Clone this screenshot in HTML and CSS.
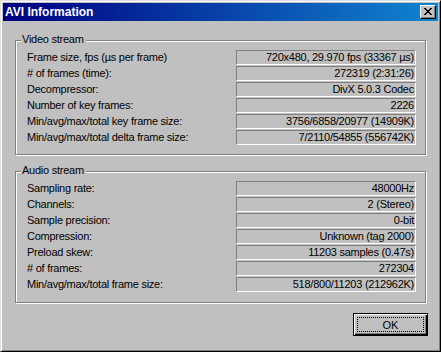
FILE: index.html
```html
<!DOCTYPE html>
<html lang="en">
<head>
  <meta charset="UTF-8" />
  <title>AVI Information</title>
  <link rel="stylesheet" href="styles.css">
</head>
<body>

<div class="window">
  <div class="titlebar">
    <span class="title">AVI Information</span>
    <button class="close" aria-label="Close">
      <svg width="8" height="7" viewBox="0 0 8 7" shape-rendering="crispEdges">
        <path d="M0 0h2v1h-2z M6 0h2v1h-2z M1 1h2v1h-2z M5 1h2v1h-2z M2 2h4v1h-4z M3 3h2v1h-2z M2 4h4v1h-4z M1 5h2v1h-2z M5 5h2v1h-2z M0 6h2v1h-2z M6 6h2v1h-2z" fill="#000"/>
      </svg>
    </button>
  </div>

  <div class="group video">
    <span class="group-title">Video stream</span>
    <div class="rows">
      <span class="label">Frame size, fps (µs per frame)</span>
      <span class="value">720x480, 29.970 fps (33367 µs)</span>
      <span class="label"># of frames (time):</span>
      <span class="value">272319 (2:31:26)</span>
      <span class="label">Decompressor:</span>
      <span class="value">DivX 5.0.3 Codec</span>
      <span class="label">Number of key frames:</span>
      <span class="value">2226</span>
      <span class="label">Min/avg/max/total key frame size:</span>
      <span class="value">3756/6858/20977 (14909K)</span>
      <span class="label">Min/avg/max/total delta frame size:</span>
      <span class="value">7/2110/54855 (556742K)</span>
    </div>
  </div>

  <div class="group audio">
    <span class="group-title">Audio stream</span>
    <div class="rows">
      <span class="label">Sampling rate:</span>
      <span class="value">48000Hz</span>
      <span class="label">Channels:</span>
      <span class="value">2 (Stereo)</span>
      <span class="label">Sample precision:</span>
      <span class="value">0-bit</span>
      <span class="label">Compression:</span>
      <span class="value">Unknown (tag 2000)</span>
      <span class="label">Preload skew:</span>
      <span class="value">11203 samples (0.47s)</span>
      <span class="label"># of frames:</span>
      <span class="value">272304</span>
      <span class="label">Min/avg/max/total frame size:</span>
      <span class="value">518/800/11203 (212962K)</span>
    </div>
  </div>

  <div class="actions">
    <button class="ok"><span class="focus">OK</span></button>
  </div>
</div>

</body>
</html>
```

FILE: styles.css
```css
body {
  margin: 0;
  background: #c0c0c0;
  font-family: "Liberation Sans", Arial, sans-serif;
  font-size: 11px;
  letter-spacing: -0.25px;
  color: #000;
}
.window {
  width: 441px;
  height: 352px;
  box-sizing: border-box;
  background: #c0c0c0;
  border: 1px solid;
  border-color: #dfdfdf #000 #000 #dfdfdf;
  box-shadow: inset 1px 1px #fff, inset -1px -1px #808080;
  padding: 2px;
}
.titlebar {
  height: 18px;
  display: flex;
  align-items: center;
  justify-content: space-between;
  padding: 0 2px 0 2px;
  background: linear-gradient(to right, #000080, #1084d0);
}
.title {
  color: #fff;
  font-weight: bold;
  font-size: 12px;
  letter-spacing: 0;
}
.close {
  width: 16px;
  height: 14px;
  box-sizing: border-box;
  padding: 2px 0 0 3px;
  margin: 0;
  display: flex;
  align-items: flex-start;
  background: #c0c0c0;
  border: 1px solid;
  border-color: #fff #000 #000 #fff;
  box-shadow: inset -1px -1px #808080;
}
.group {
  position: relative;
  margin: 19px 12px 0;
  border: 1px solid #808080;
  box-shadow: inset 1px 1px #fff, 1px 1px #fff;
  padding: 9px 9px 9px 11px;
}
.audio {
  margin-top: 16px;
  padding-bottom: 10px;
}
.group-title {
  position: absolute;
  top: -8px;
  left: 5px;
  padding: 0 2px 0 1px;
  line-height: 13px;
  background: #c0c0c0;
}
.rows {
  display: grid;
  grid-template-columns: 1fr 180px;
  row-gap: 1px;
}
.label {
  line-height: 15px;
  white-space: nowrap;
}
.value {
  height: 15px;
  box-sizing: border-box;
  border: 1px solid;
  border-color: #808080 #fff #fff #808080;
  padding-right: 1px;
  line-height: 13px;
  text-align: right;
  white-space: nowrap;
}
.actions {
  display: flex;
  justify-content: flex-end;
  margin: 10px 10px 0 0;
}
.ok {
  width: 75px;
  height: 23px;
  box-sizing: border-box;
  padding: 3px;
  margin: 0;
  display: flex;
  background: #c0c0c0;
  border: 1px solid #000;
  box-shadow: inset 1px 1px #fff, inset -1px -1px #000, inset -2px -2px #808080;
  font: inherit;
  letter-spacing: 0;
}
.focus {
  flex: 1;
  border: 1px dotted #000;
  display: flex;
  align-items: center;
  justify-content: center;
}
```
